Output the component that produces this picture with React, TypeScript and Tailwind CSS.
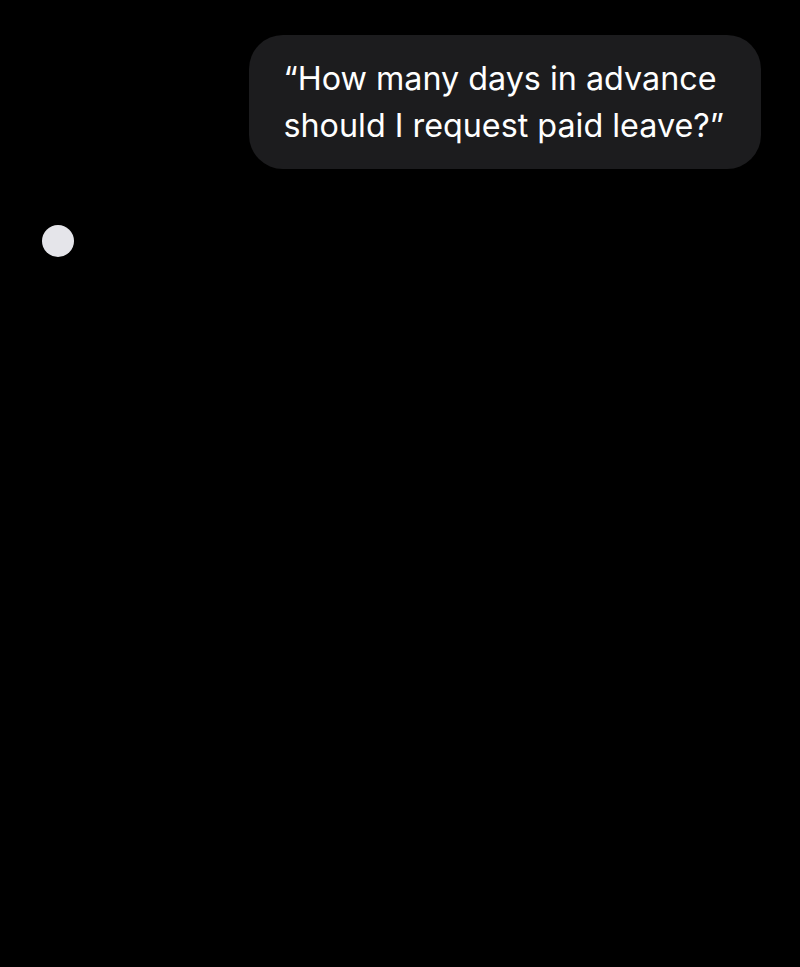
export default function App() {
  return (
    <div className="min-h-screen w-full bg-black" style={{ fontFamily: "Inter, 'Liberation Sans', sans-serif" }}>
      <div className="flex flex-col px-[39px] pt-[35px]">
        {/* User message */}
        <div className="flex justify-end">
          <div className="rounded-[34px] bg-[#1c1c1e] pl-[34px] pr-[37px] pt-[20px] pb-[20px]">
            <p className="text-[32.3px] leading-[47px] text-white">
              “How many days in advance
              <br />
              should I request paid leave?”
            </p>
          </div>
        </div>

        {/* Thinking indicator */}
        <div className="mt-[56px] ml-[3px] h-[32px] w-[32px] rounded-full bg-[#e5e5ea]" />
      </div>
    </div>
  )
}
